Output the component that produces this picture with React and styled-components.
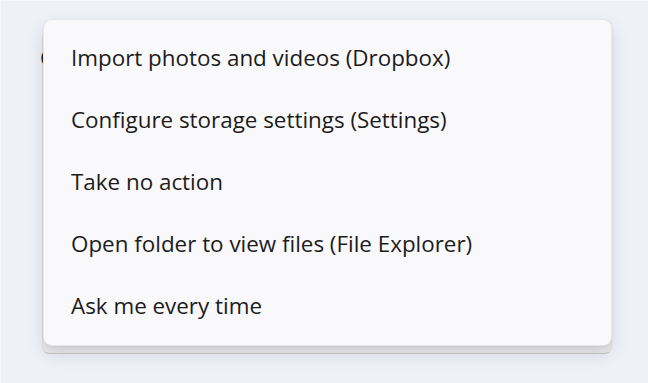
import React from "react";
import styled, { createGlobalStyle } from "styled-components";

const Global = createGlobalStyle`
  html, body { margin: 0; padding: 0; }
  body {
    width: 648px;
    height: 383px;
    overflow: hidden;
    background: #eef1f7;
    font-family: "Open Sans", "Noto Sans", sans-serif;
  }
`;

const Page = styled.div`
  position: relative;
  width: 648px;
  height: 383px;
  box-sizing: border-box;
  border-top: 1px solid #f7f8fb;
  border-left: 1px solid #f7f8fb;
  padding: 30px 36px 0 41px;
`;

const Card = styled.div`
  box-sizing: border-box;
  width: 570px;
  height: 323px;
  background: #ebebed;
  border: 1px solid #e2e3e6;
  border-bottom: 1px solid #c8c9cc;
  border-radius: 7px;
  display: flex;
  flex-direction: column;
`;

const CardRow = styled.div`
  height: 50px;
  display: flex;
  align-items: center;
  font-size: 22px;
  color: #1b1b1b;
  margin-left: -3px;
`;

const Menu = styled.div`
  position: absolute;
  left: 42px;
  top: 18px;
  width: 569px;
  height: 327px;
  box-sizing: border-box;
  background: #f9f9fb;
  border: 1px solid rgba(0, 0, 0, 0.07);
  border-radius: 9px;
  box-shadow: 0 8px 18px rgba(0, 0, 0, 0.12), 0 1px 3px rgba(0, 0, 0, 0.06);
  padding: 7px 0 9px;
  display: flex;
  flex-direction: column;
`;

const Item = styled.div`
  height: 62px;
  display: flex;
  align-items: center;
  padding-left: 27px;
  font-size: 22.4px;
  color: #1c1c1c;
  white-space: nowrap;
`;

const items = [
  "Import photos and videos (Dropbox)",
  "Configure storage settings (Settings)",
  "Take no action",
  "Open folder to view files (File Explorer)",
  "Ask me every time",
];

export default function App() {
  return (
    <>
      <Global />
      <Page>
        <Card>
          <CardRow>C</CardRow>
        </Card>
        <Menu>
          {items.map((t) => (
            <Item key={t}>{t}</Item>
          ))}
        </Menu>
      </Page>
    </>
  );
}
